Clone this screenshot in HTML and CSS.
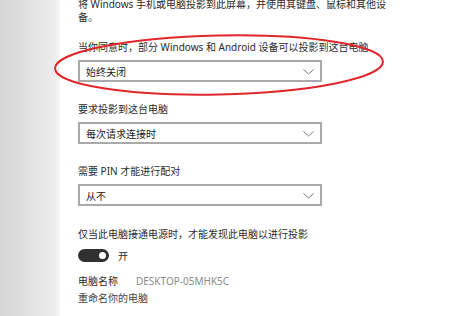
FILE: index.html
```html
<!DOCTYPE html>
<html lang="zh-CN">
<head>
  <meta charset="UTF-8">
  <title>投影到此电脑</title>
  <link rel="stylesheet" href="styles.css">
</head>
<body>
  <div class="page">
    <div class="sidebar"></div>

    <div class="content">
      <p class="intro">将 Windows 手机或电脑投影到此屏幕，并使用其键盘、鼠标和其他设<br>备。</p>

      <div class="field">
        <label>当你同意时，部分 Windows 和 Android 设备可以投影到这台电脑</label>
        <div class="select">
          <span>始终关闭</span>
          <svg width="11" height="6" viewBox="0 0 11 6"><polyline points="0.5,0.5 5.5,5 10.5,0.5" fill="none" stroke="#777" stroke-width="1"/></svg>
        </div>
      </div>

      <div class="field">
        <label>要求投影到这台电脑</label>
        <div class="select">
          <span>每次请求连接时</span>
          <svg width="11" height="6" viewBox="0 0 11 6"><polyline points="0.5,0.5 5.5,5 10.5,0.5" fill="none" stroke="#777" stroke-width="1"/></svg>
        </div>
      </div>

      <div class="field">
        <label>需要 PIN 才能进行配对</label>
        <div class="select">
          <span>从不</span>
          <svg width="11" height="6" viewBox="0 0 11 6"><polyline points="0.5,0.5 5.5,5 10.5,0.5" fill="none" stroke="#777" stroke-width="1"/></svg>
        </div>
      </div>

      <div class="power">
        <label>仅当此电脑接通电源时，才能发现此电脑以进行投影</label>
        <div class="toggle-row">
          <span class="toggle"><span class="knob"></span></span>
          <span>开</span>
        </div>
      </div>

      <div class="pc-name">
        <div class="name-row">
          <span class="key">电脑名称</span>
          <span class="value">DESKTOP-05MHK5C</span>
        </div>
        <div class="rename">重命名你的电脑</div>
      </div>
    </div>

    <!-- red marker round the first option -->
    <svg class="marker" width="474" height="316" viewBox="0 0 474 316">
      <ellipse cx="219" cy="65" rx="164" ry="29.5" transform="rotate(-1.2 219 65)" fill="none" stroke="#e0262b" stroke-width="2"/>
    </svg>
  </div>
</body>
</html>
```

FILE: styles.css
```css
html, body {
  margin: 0;
  padding: 0;
  background: #fff;
}

.page {
  position: relative;
  display: flex;
  width: 474px;
  height: 316px;
  overflow: hidden;
  font-family: "Noto Sans", "Noto Sans CJK SC", sans-serif;
  font-size: 10px;
  color: #2b2b2b;
}

/* blurred grey strip on the left */

.sidebar {
  width: 60px;
  flex: none;
  background: linear-gradient(to right, #d6d6d6, #e4e4e4 60%, #ececec 90%, #f6f6f6);
}

.content {
  padding-left: 18px;
  margin-top: -2px;
}

.intro {
  margin: 0;
  white-space: nowrap;
  line-height: 13px;
}

.field {
  margin-top: 17px;
}

.field + .field {
  margin-top: 21px;
}

.field label,
.power label {
  display: block;
  line-height: 13px;
  margin-bottom: 6px;
}

.select {
  box-sizing: border-box;
  width: 244px;
  height: 22px;
  border: 2px solid #a9a9a9;
  display: flex;
  align-items: center;
  justify-content: space-between;
  padding: 0 6px 0 6px;
  color: #222;
}

.select svg {
  margin-top: 1px;
}

.power {
  margin-top: 22px;
}

.power label {
  margin-bottom: 7px;
}

.toggle-row {
  display: flex;
  align-items: center;
  gap: 9px;
  height: 14px;
}

.toggle {
  box-sizing: border-box;
  width: 31px;
  height: 13px;
  border-radius: 7px;
  background: #303030;
  display: flex;
  align-items: center;
  justify-content: flex-end;
  padding-right: 3px;
}

.knob {
  width: 7px;
  height: 7px;
  border-radius: 50%;
  background: #fff;
}

.pc-name {
  margin-top: 11px;
  line-height: 17px;
}

.name-row {
  display: flex;
  gap: 18px;
}

.value {
  color: #8a8a8a;
}

.rename {
  color: #444;
}

.marker {
  position: absolute;
  left: 0;
  top: 0;
  pointer-events: none;
}
```
